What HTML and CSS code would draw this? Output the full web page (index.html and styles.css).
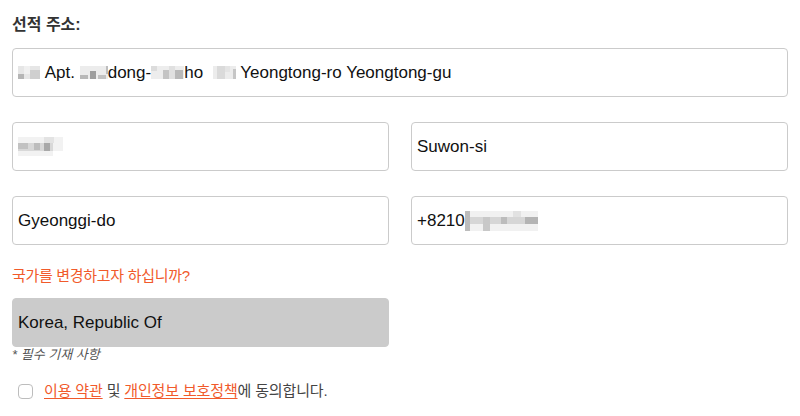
FILE: index.html
```html
<!DOCTYPE html>
<html lang="ko">
<head>
    <meta charset="UTF-8">
    <meta name="viewport" content="width=device-width, initial-scale=1.0">
    <title>선적 주소</title>
    <link rel="stylesheet" href="styles.css">
</head>
<body>
    <div class="form">
        <div class="section-label">선적 주소:</div>

        <div class="input">
            <svg class="mosaic" width="22" height="13" viewBox="0 0 22 13">
                <rect x="0" y="0" width="22" height="13" fill="#e6e6e6"/>
                <rect x="0" y="8" width="6" height="5" fill="#b5b5b5"/>
                <rect x="6" y="0" width="6" height="8" fill="#f0f0f0"/>
                <rect x="12" y="4" width="10" height="9" fill="#cfcfcf"/>
            </svg>
            <span class="txt">&nbsp;Apt.&nbsp;</span>
            <svg class="mosaic" width="28" height="13" viewBox="0 0 28 13">
                <rect x="0" y="0" width="28" height="13" fill="#ececec"/>
                <rect x="0" y="9" width="8" height="4" fill="#b8b8b8"/>
                <rect x="10" y="5" width="6" height="8" fill="#9e9e9e"/>
                <rect x="18" y="9" width="8" height="4" fill="#c2c2c2"/>
                <rect x="26" y="0" width="2" height="8" fill="#bdbdbd"/>
            </svg>
            <span class="txt">dong-</span>
            <svg class="mosaic" width="33" height="13" viewBox="0 0 33 13">
                <rect x="0" y="0" width="33" height="13" fill="#ededed"/>
                <rect x="0" y="0" width="6" height="5" fill="#dcdcdc"/>
                <rect x="12" y="4" width="6" height="9" fill="#c4c4c4"/>
                <rect x="18" y="0" width="6" height="13" fill="#e0e0e0"/>
                <rect x="24" y="4" width="8" height="9" fill="#b9b9b9"/>
            </svg>
            <span class="txt">ho&nbsp;&nbsp;</span>
            <svg class="mosaic" width="23" height="13" viewBox="0 0 23 13">
                <rect x="0" y="0" width="23" height="13" fill="#ececec"/>
                <rect x="4" y="0" width="8" height="13" fill="#dadada"/>
                <rect x="12" y="0" width="5" height="6" fill="#e4e4e4"/>
                <rect x="20" y="3" width="3" height="10" fill="#c6c6c6"/>
            </svg>
            <span class="txt">&nbsp;Yeongtong-ro Yeongtong-gu</span>
        </div>

        <div class="grid">
            <div class="input">
                <svg class="mosaic" width="45" height="19" viewBox="0 0 45 19">
                    <rect x="0" y="0" width="45" height="19" fill="#f2f2f2"/>
                    <rect x="0" y="6" width="35" height="8" fill="#d8d8d8"/>
                    <rect x="0" y="6" width="10" height="6" fill="#c2c2c2"/>
                    <rect x="16" y="6" width="6" height="7" fill="#bdbdbd"/>
                    <rect x="26" y="6" width="6" height="8" fill="#a9a9a9"/>
                    <rect x="26" y="0" width="10" height="6" fill="#e3e3e3"/>
                    <rect x="35" y="14" width="10" height="5" fill="#ffffff"/>
                </svg>
            </div>
            <div class="input"><span class="txt">Suwon-si</span></div>
            <div class="input"><span class="txt">Gyeonggi-do</span></div>
            <div class="input">
                <span class="txt">+8210</span>
                <svg class="mosaic" width="73" height="20" viewBox="0 0 73 20">
                    <rect x="0" y="0" width="73" height="20" fill="#f1f1f1"/>
                    <rect x="0" y="6" width="73" height="7" fill="#d6d6d6"/>
                    <rect x="0" y="0" width="5" height="20" fill="#bcbcbc"/>
                    <rect x="18" y="6" width="7" height="14" fill="#c8c8c8"/>
                    <rect x="36" y="6" width="6" height="7" fill="#bcbcbc"/>
                    <rect x="48" y="0" width="8" height="6" fill="#e2e2e2"/>
                    <rect x="60" y="6" width="13" height="7" fill="#b4b4b4"/>
                </svg>
            </div>
        </div>

        <div class="country-note">국가를 변경하고자 하십니까?</div>

        <div class="grid">
            <div class="input select-disabled"><span class="txt">Korea, Republic Of</span></div>
        </div>
        <div class="required">* 필수 기재 사항</div>

        <label class="agree">
            <input type="checkbox" class="check">
            <span><a href="#" class="link">이용 약관</a> 및 <a href="#" class="link">개인정보 보호정책</a>에 동의합니다.</span>
        </label>
    </div>
</body>
</html>
```

FILE: styles.css
```css
body {
    margin: 0;
    background: #fff;
    font-family: "Liberation Sans", "Noto Sans CJK KR", sans-serif;
    color: #111;
}
.form {
    padding: 0 12px;
}
.section-label {
    padding-top: 15px;
    margin-bottom: 13px;
    font-size: 16px;
    line-height: 20px;
    font-weight: bold;
    color: #333;
}
.input {
    box-sizing: border-box;
    height: 49px;
    border: 1px solid #cbcbcb;
    border-radius: 4px;
    padding: 0 5px;
    display: flex;
    align-items: center;
    font-size: 17px;
    white-space: pre;
}
.mosaic {
    display: block;
    flex: none;
}
.grid {
    display: grid;
    grid-template-columns: 1fr 1fr;
    column-gap: 22px;
    row-gap: 25px;
    margin-top: 25px;
}
.country-note {
    margin-top: 21px;
    font-size: 15px;
    line-height: 20px;
    color: #f15a2b;
    letter-spacing: -0.3px;
}
.country-note + .grid {
    margin-top: 12px;
}
.select-disabled {
    background: #cbcbcb;
    border-color: #cbcbcb;
}
.required {
    font-size: 13px;
    line-height: 16px;
    font-style: italic;
    color: #555;
}
.agree {
    display: flex;
    align-items: center;
    margin-top: 18px;
    padding-left: 6px;
    font-size: 15px;
    line-height: 20px;
    color: #444;
    letter-spacing: -0.15px;
}
.check {
    appearance: none;
    -webkit-appearance: none;
    box-sizing: border-box;
    width: 15px;
    height: 15px;
    margin: 0 11px 0 0;
    border: 1px solid #bdbdbd;
    border-radius: 4px;
    background: #fff;
}
.link {
    color: #f15a2b;
    text-decoration: underline;
    text-underline-offset: 2px;
}
```
